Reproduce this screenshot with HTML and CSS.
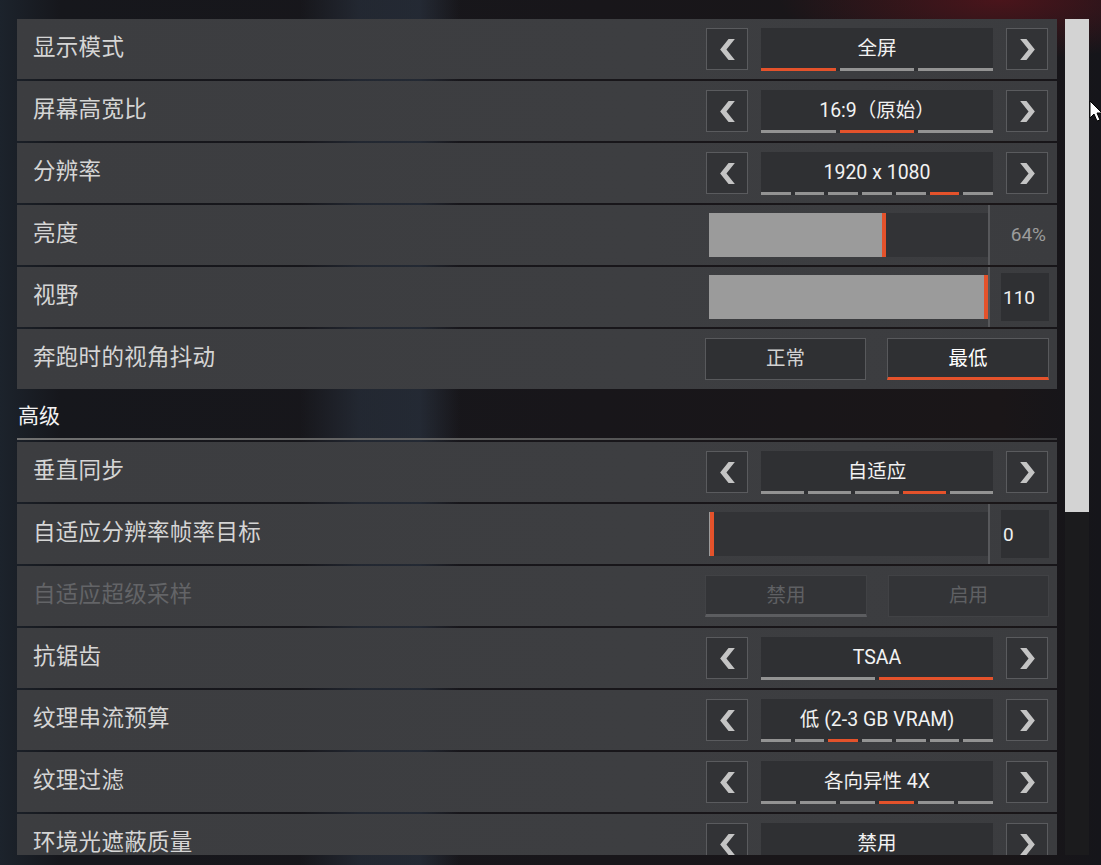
FILE: index.html
```html
<!DOCTYPE html>
<html lang="zh-CN">
<head>
<meta charset="utf-8">
<title>视频设置</title>
<link rel="stylesheet" href="styles.css">
</head>
<body>
<div class="screen">
  <div class="list">
    <div class="row">
      <span class="label">显示模式</span>
      <div class="stepper">
        <button class="arrow"><svg viewBox="0 0 14 20" width="15" height="21"><polygon points="14,0 8,0 0,10 8,20 14,20 6,10"/></svg></button>
        <div class="value"><span class="vtext">全屏</span><div class="segs"><i class="on"></i><i></i><i></i></div></div>
        <button class="arrow"><svg viewBox="0 0 14 20" width="15" height="21"><polygon points="0,0 6,0 14,10 6,20 0,20 8,10"/></svg></button>
      </div>
    </div>
    <div class="row">
      <span class="label">屏幕高宽比</span>
      <div class="stepper">
        <button class="arrow"><svg viewBox="0 0 14 20" width="15" height="21"><polygon points="14,0 8,0 0,10 8,20 14,20 6,10"/></svg></button>
        <div class="value"><span class="vtext">16:9（原始）</span><div class="segs"><i></i><i class="on"></i><i></i></div></div>
        <button class="arrow"><svg viewBox="0 0 14 20" width="15" height="21"><polygon points="0,0 6,0 14,10 6,20 0,20 8,10"/></svg></button>
      </div>
    </div>
    <div class="row">
      <span class="label">分辨率</span>
      <div class="stepper">
        <button class="arrow"><svg viewBox="0 0 14 20" width="15" height="21"><polygon points="14,0 8,0 0,10 8,20 14,20 6,10"/></svg></button>
        <div class="value"><span class="vtext">1920 x 1080</span><div class="segs"><i></i><i></i><i></i><i></i><i></i><i class="on"></i><i></i></div></div>
        <button class="arrow"><svg viewBox="0 0 14 20" width="15" height="21"><polygon points="0,0 6,0 14,10 6,20 0,20 8,10"/></svg></button>
      </div>
    </div>
    <div class="row slider-row">
      <span class="label">亮度</span>
      <div class="slider-group">
        <div class="track"><div class="fill" style="width:173px"></div><div class="thumb"></div></div>
        <div class="divider"></div>
        <div class="num-area"><span class="num plain">64%</span></div>
      </div>
    </div>
    <div class="row slider-row">
      <span class="label">视野</span>
      <div class="slider-group">
        <div class="track"><div class="fill" style="width:276px"></div><div class="thumb"></div></div>
        <div class="divider"></div>
        <div class="num-area"><span class="num boxed">110</span></div>
      </div>
    </div>
    <div class="row">
      <span class="label">奔跑时的视角抖动</span>
      <div class="toggle">
        <button class="opt">正常</button>
        <button class="opt active">最低</button>
      </div>
    </div>

    <div class="section-header">高级</div>

    <div class="row">
      <span class="label">垂直同步</span>
      <div class="stepper">
        <button class="arrow"><svg viewBox="0 0 14 20" width="15" height="21"><polygon points="14,0 8,0 0,10 8,20 14,20 6,10"/></svg></button>
        <div class="value"><span class="vtext">自适应</span><div class="segs"><i></i><i></i><i></i><i class="on"></i><i></i></div></div>
        <button class="arrow"><svg viewBox="0 0 14 20" width="15" height="21"><polygon points="0,0 6,0 14,10 6,20 0,20 8,10"/></svg></button>
      </div>
    </div>
    <div class="row slider-row">
      <span class="label">自适应分辨率帧率目标</span>
      <div class="slider-group">
        <div class="track"><div class="fill" style="width:1px"></div><div class="thumb"></div></div>
        <div class="divider"></div>
        <div class="num-area"><span class="num boxed">0</span></div>
      </div>
    </div>
    <div class="row disabled">
      <span class="label">自适应超级采样</span>
      <div class="toggle">
        <button class="opt active">禁用</button>
        <button class="opt">启用</button>
      </div>
    </div>
    <div class="row">
      <span class="label">抗锯齿</span>
      <div class="stepper">
        <button class="arrow"><svg viewBox="0 0 14 20" width="15" height="21"><polygon points="14,0 8,0 0,10 8,20 14,20 6,10"/></svg></button>
        <div class="value"><span class="vtext">TSAA</span><div class="segs"><i></i><i class="on"></i></div></div>
        <button class="arrow"><svg viewBox="0 0 14 20" width="15" height="21"><polygon points="0,0 6,0 14,10 6,20 0,20 8,10"/></svg></button>
      </div>
    </div>
    <div class="row">
      <span class="label">纹理串流预算</span>
      <div class="stepper">
        <button class="arrow"><svg viewBox="0 0 14 20" width="15" height="21"><polygon points="14,0 8,0 0,10 8,20 14,20 6,10"/></svg></button>
        <div class="value"><span class="vtext">低 (2-3 GB VRAM)</span><div class="segs"><i></i><i></i><i class="on"></i><i></i><i></i><i></i><i></i></div></div>
        <button class="arrow"><svg viewBox="0 0 14 20" width="15" height="21"><polygon points="0,0 6,0 14,10 6,20 0,20 8,10"/></svg></button>
      </div>
    </div>
    <div class="row">
      <span class="label">纹理过滤</span>
      <div class="stepper">
        <button class="arrow"><svg viewBox="0 0 14 20" width="15" height="21"><polygon points="14,0 8,0 0,10 8,20 14,20 6,10"/></svg></button>
        <div class="value"><span class="vtext">各向异性 4X</span><div class="segs"><i></i><i></i><i></i><i class="on"></i><i></i><i></i></div></div>
        <button class="arrow"><svg viewBox="0 0 14 20" width="15" height="21"><polygon points="0,0 6,0 14,10 6,20 0,20 8,10"/></svg></button>
      </div>
    </div>
    <div class="row">
      <span class="label">环境光遮蔽质量</span>
      <div class="stepper">
        <button class="arrow"><svg viewBox="0 0 14 20" width="15" height="21"><polygon points="14,0 8,0 0,10 8,20 14,20 6,10"/></svg></button>
        <div class="value"><span class="vtext">禁用</span><div class="segs"><i class="on"></i><i></i><i></i><i></i></div></div>
        <button class="arrow"><svg viewBox="0 0 14 20" width="15" height="21"><polygon points="0,0 6,0 14,10 6,20 0,20 8,10"/></svg></button>
      </div>
    </div>
  </div>
  <div class="scrollbar"><div class="thumb-bar"></div></div>
  <svg class="cursor" viewBox="0 0 14 22" width="14" height="22"><polygon points="1,1 1,18 5,14 8,21 11,20 8,13 13,13" fill="#ffffff" stroke="#000000" stroke-width="1"/></svg>
</div>
</body>
</html>
```

FILE: styles.css
```css
* { box-sizing: border-box; }

html, body {
  margin: 0;
  padding: 0;
  width: 1101px;
  height: 865px;
  overflow: hidden;
}

body {
  font-family: "Noto Sans CJK SC", "Noto Sans", sans-serif;
  background-color: #17171b;
  background-image:
    radial-gradient(ellipse 220px 60px at 1000px 0px, rgba(90, 20, 28, 0.75), rgba(90, 20, 28, 0) 100%),
    linear-gradient(90deg, rgba(0,0,0,0) 300px, rgba(44, 54, 68, 0.55) 360px, rgba(44, 54, 68, 0.6) 420px, rgba(0,0,0,0) 460px),
    linear-gradient(90deg, #1c232c 0px, #16171c 60px, #18161a 600px, #1a1618 1000px, #15151a 1101px);
}

.screen {
  position: relative;
  display: flex;
  gap: 8px;
  padding: 19px 0 0 17px;
  height: 865px;
}

.list {
  width: 1040px;
  height: 836px;
  overflow: hidden;
  display: flex;
  flex-direction: column;
}

.row {
  flex: none;
  height: 60px;
  margin-bottom: 2px;
  display: flex;
  align-items: center;
  justify-content: space-between;
  padding: 0 8px 0 16px;
  background: linear-gradient(90deg, #3c3d40 0%, #3d3e41 60%, #3b3c3f 100%);
}

.label {
  font-size: 22.5px;
  color: #d5d5d5;
  letter-spacing: 0.3px;
  line-height: 1;
  padding-bottom: 7px;
}

.stepper {
  display: flex;
  align-items: center;
  gap: 13px;
  margin-right: 1px;
}

.arrow {
  width: 42px;
  height: 42px;
  padding: 0;
  margin: 0;
  border: 1px solid #5a5b5e;
  background: #323336;
  display: flex;
  align-items: center;
  justify-content: center;
}

.arrow svg { fill: #c4c4c4; display: block; flex: none; }

.value {
  width: 232px;
  height: 43px;
  background: #2f3033;
  display: flex;
  flex-direction: column;
  justify-content: space-between;
  align-items: stretch;
}

.vtext {
  flex: 1;
  display: flex;
  align-items: center;
  justify-content: center;
  font-family: "Roboto", "Noto Sans CJK SC", sans-serif;
  font-size: 19.5px;
  color: #f2f2f2;
  line-height: 1;
  padding-top: 2px;
}

.segs {
  display: flex;
  gap: 4px;
  height: 3px;
}

.segs i {
  flex: 1;
  height: 3px;
  background: #939393;
}

.segs i.on { background: #e4522b; }

.slider-row { padding-right: 0; }

.slider-group {
  display: flex;
  align-items: center;
  height: 100%;
}

.track {
  width: 279px;
  height: 44px;
  background: #323336;
  display: flex;
}

.fill {
  height: 100%;
  background: #9b9b9b;
}

.thumb {
  width: 4px;
  height: 100%;
  background: #e4522b;
}

.divider {
  width: 2px;
  height: 100%;
  background: #57585b;
}

.num-area {
  width: 67px;
  height: 100%;
  display: flex;
  align-items: center;
  padding: 0 8px 0 11px;
}

.num {
  font-family: "Roboto", "Noto Sans", sans-serif;
  font-size: 19px;
  line-height: 1;
}

.num.plain {
  width: 100%;
  text-align: right;
  color: #9c9c9c;
  padding-right: 3px;
  padding-bottom: 2px;
}

.num.boxed {
  width: 48px;
  height: 48px;
  background: #2f3033;
  color: #f0f0f0;
  display: flex;
  align-items: center;
  padding-left: 2px;
}

.toggle {
  display: flex;
  gap: 21px;
}

.opt {
  width: 161px;
  height: 42px;
  margin: 0;
  padding: 0 0 4px 0;
  border: 1px solid #58595c;
  background: #2f3033;
  color: #d2d2d2;
  font-family: "Noto Sans CJK SC", sans-serif;
  font-size: 19.5px;
  line-height: 1;
}

.opt.active {
  color: #ffffff;
  border-bottom: 3px solid #e4522b;
  width: 162px;
  padding-bottom: 2px;
}

.disabled .label { color: #636467; }
.disabled .opt {
  color: #5f6063;
  border-color: #414245;
  background: #333437;
}
.disabled .opt.active {
  color: #5f6063;
  border-bottom: 3px solid #5c5d60;
}

.section-header {
  flex: none;
  height: 49px;
  margin: 0 0 2px 0;
  padding: 0 0 0 1px;
  font-size: 21px;
  color: #f2f2f2;
  line-height: 1;
  display: flex;
  align-items: center;
  border-bottom: 2px solid transparent;
  border-image: linear-gradient(90deg, #707070, #5a5a5a 50%, #3a3a3c) 1;
}

.scrollbar {
  width: 24px;
  height: 836px;
  background: #1b1b1d;
}

.thumb-bar {
  height: 493px;
  background: #d3d3d3;
}

.cursor {
  position: absolute;
  left: 1089px;
  top: 100px;
}
```
